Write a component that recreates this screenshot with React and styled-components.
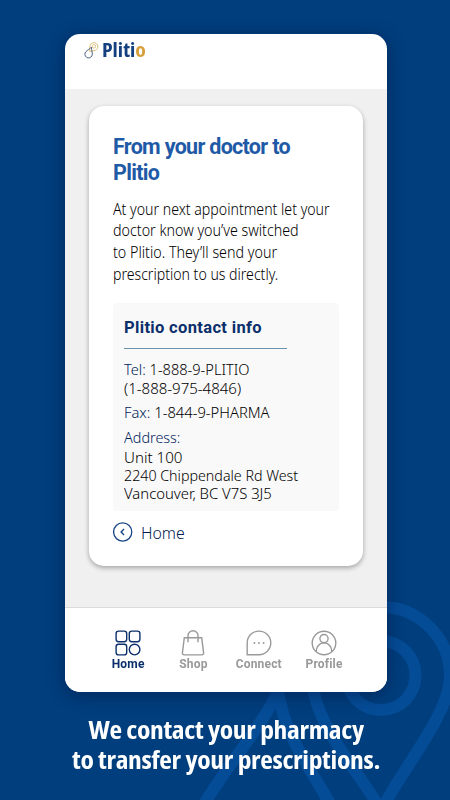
import React from 'react';
import styled, { createGlobalStyle } from 'styled-components';

const GlobalStyle = createGlobalStyle`
  * {
    box-sizing: border-box;
  }
  body {
    margin: 0;
    background: #013e7d;
  }
`;

const Page = styled.main`
  position: relative;
  width: 450px;
  height: 800px;
  overflow: hidden;
  background: #013e7d;
  font-family: 'Noto Sans', 'Open Sans', sans-serif;
`;

// decorative pins behind the phone
const Backdrop = styled.svg`
  position: absolute;
  inset: 0;
`;

const Phone = styled.section`
  position: relative;
  display: flex;
  flex-direction: column;
  width: 322px;
  height: 658px;
  margin: 34px 0 0 64.5px;
  border-radius: 15px;
  overflow: hidden;
  background: #fff;
`;

const PhoneShadow = styled.div`
  display: flow-root;
  filter: drop-shadow(0 3px 9px rgba(0, 10, 50, 0.45));
`;

const Header = styled.header`
  display: flex;
  align-items: flex-start;
  gap: 3px;
  height: 54.5px;
  padding: 5.5px 0 0 19px;
`;

const LogoMark = styled.svg`
  width: 15px;
  height: 18px;
  margin-top: 1px;
`;

const Logo = styled.span`
  font-family: 'Open Sans', sans-serif;
  font-size: 19.5px;
  font-weight: 700;
  font-stretch: 75%;
  line-height: 19px;
  color: #14407f;
  transform: scaleX(1.11);
  transform-origin: left;

  em {
    font-style: normal;
    color: #d8a03c;
  }
`;

const Body = styled.div`
  flex: 1;
  padding: 17.5px 24px 0 24.5px;
  background: #f0f0f0;
`;

const Card = styled.article`
  height: 460px;
  padding: 27.5px 24px 0;
  border-radius: 15px;
  background: #fff;
  box-shadow: 0 2px 5px rgba(0, 0, 0, 0.32);
`;

const Title = styled.h1`
  margin: 0 0 12px;
  font-family: Roboto, sans-serif;
  font-size: 21.5px;
  font-weight: 700;
  line-height: 26px;
  letter-spacing: -0.7px;
  color: #1f5aa6;
`;

const Line = styled.span`
  display: block;
  width: max-content;
  white-space: nowrap;
  transform: scaleX(${props => props.$fit || 1});
  transform-origin: left;
`;

const Intro = styled.p`
  margin: 0 0 18.5px;
  font-size: 16.5px;
  font-weight: 300;
  line-height: 21.7px;
  color: #000;
`;

const Contact = styled.div`
  height: 208px;
  padding: 15.5px 11px 0;
  border-radius: 4px;
  background: #f9f9f9;
`;

const ContactTitle = styled.h2`
  width: 162.5px;
  margin: 0 0 11px;
  padding-bottom: 9.5px;
  border-bottom: 1px solid #6a93ad;
  font-family: Roboto, sans-serif;
  font-size: 16.5px;
  font-weight: 700;
  line-height: 20px;
  letter-spacing: 0.34px;
  color: #0b2f6b;
`;

const Detail = styled.div`
  margin-bottom: ${props => props.$gap || 0}px;
  font-size: ${props => props.$size || 15}px;
  font-weight: 300;
  line-height: ${props => props.$height || 19}px;
  color: #000;
`;

const Label = styled.span`
  color: #00235c;
`;

const BackLink = styled.a`
  display: flex;
  align-items: center;
  gap: 7.5px;
  height: 20px;
  margin-top: 11.5px;
  font-size: 16.5px;
  font-weight: 300;
  color: #00194f;
`;

const Nav = styled.nav`
  display: grid;
  grid-template-columns: repeat(4, 65.3px);
  height: 85px;
  padding: 21px 0 0 31px;
  border-top: 1px solid #dcdcdc;
  background: #fff;
`;

const NavItem = styled.div`
  display: flex;
  flex-direction: column;
  align-items: center;
  font-family: Roboto, sans-serif;
  font-size: 12px;
  font-weight: 700;
  line-height: 15px;
  letter-spacing: 0.18px;
  color: ${props => (props.$active ? '#0b2f6b' : '#999')};

  svg {
    display: block;
    width: 28px;
    height: 28px;
  }
`;

const Caption = styled.p`
  display: flex;
  flex-direction: column;
  align-items: center;
  position: relative;
  margin: 22px 0 0 2px;
  font-family: 'Open Sans', sans-serif;
  font-size: 25px;
  font-weight: 700;
  font-stretch: 75%;
  line-height: 30px;
  letter-spacing: -0.3px;
  color: #fff;

  ${Line} {
    transform-origin: center;
  }
`;

const icons = {
  Home: (
    <>
      <rect x="2.1" y="2.1" width="10.6" height="10.6" rx="2.4" />
      <rect x="15.3" y="2.1" width="10.6" height="10.6" rx="2.4" />
      <rect x="2.1" y="15.3" width="10.6" height="10.6" rx="2.4" />
      <circle cx="20.6" cy="20.6" r="5.3" />
    </>
  ),
  Shop: (
    <>
      <path d="M5.3 8.7h17.4l1.9 15.2a1.8 1.8 0 0 1-1.8 2H5.2a1.8 1.8 0 0 1-1.8-2z" />
      <path d="M9 12.8V6.6a5 4.8 0 0 1 10 0v6.2" />
    </>
  ),
  Connect: (
    <>
      <path d="M2.2 25.7V14A11.8 11.8 0 1 1 14 25.7z" />
      <path d="M9.4 14h.01M14 14h.01M18.6 14h.01" strokeWidth="1.9" />
    </>
  ),
  Profile: (
    <>
      <circle cx="14" cy="14" r="11.8" />
      <circle cx="14" cy="9.6" r="4.1" />
      <path d="M6.3 22.6v-1a7.7 7.7 0 0 1 15.4 0v1" />
    </>
  ),
};

const tabs = ['Home', 'Shop', 'Connect', 'Profile'];

const intro = [
  ['At your next appointment let your', 0.857],
  ['doctor know you’ve switched', 0.866],
  ['to Plitio. They’ll send your', 0.866],
  ['prescription to us directly.', 0.855],
];

const address = [
  ['Unit 100', 1.03],
  ['2240 Chippendale Rd West', 0.97],
  ['Vancouver, BC V7S 3J5', 1.01],
];

const App = () => (
  <Page>
    <GlobalStyle />
    <Backdrop width="450" height="800" fill="none" stroke="#054c96" strokeWidth="12">
      <circle cx="381" cy="675.5" r="34.5" />
      <path d="M381 812C372 786 312 728 312 676a69 69 0 0 1 138 0C450 716 396 776 381 812z" />
      <path d="M203 806C226 766 266 722 278 690C284 738 316 776 331 806" />
    </Backdrop>

    <PhoneShadow>
      <Phone>
        <Header>
          <LogoMark viewBox="0 0 15 18" fill="none">
            <path d="M5.6 10.4C6.3 8 5.4 6.3 6.2 4.1a4 4 0 1 1 6 4.8C10.3 10.3 8 9.4 5.6 10.4z" stroke="#d9b56a" strokeWidth="0.9" />
            <circle cx="9.9" cy="5.4" r="1.7" stroke="#d9b56a" strokeWidth="0.8" />
            <path d="M7.4 6.1C5.6 8.4 3.5 8.8 1.9 10.7a3.7 3.7 0 1 0 6 4.2C9.1 12.7 7.3 9.5 7.4 6.1z" stroke="#3c5077" strokeWidth="0.9" />
          </LogoMark>
          <Logo>Pliti<em>o</em></Logo>
        </Header>

        <Body>
          <Card>
            <Title>From your doctor to<br />Plitio</Title>
            <Intro>
              {intro.map(([text, fit]) => (
                <Line key={text} $fit={fit}>{text}</Line>
              ))}
            </Intro>

            <Contact>
              <ContactTitle>Plitio contact info</ContactTitle>
              <Detail $gap={5.5}>
                <Line $fit={0.973}><Label>Tel:</Label> 1-888-9-PLITIO</Line>
                <Line>(1-888-975-4846)</Line>
              </Detail>
              <Detail $gap={6}>
                <Line $fit={0.983}><Label>Fax:</Label> 1-844-9-PHARMA</Line>
              </Detail>
              <Detail $gap={0.4}>
                <Line $fit={0.96}><Label>Address:</Label></Line>
              </Detail>
              <Detail $height={18} $size={14.7}>
                {address.map(([text, fit]) => (
                  <Line key={text} $fit={fit}>{text}</Line>
                ))}
              </Detail>
            </Contact>

            <BackLink>
              <svg width="20" height="20" fill="none" stroke="#184587" strokeWidth="1.3">
                <circle cx="9.7" cy="10" r="9.1" />
                <path d="M11 7L8.1 10l2.9 3" strokeWidth="1.4" />
              </svg>
              <Line $fit={0.96}>Home</Line>
            </BackLink>
          </Card>
        </Body>

        <Nav>
          {tabs.map(tab => (
            <NavItem key={tab} $active={tab === 'Home'}>
              <svg
                viewBox="0 0 28 28"
                fill="none"
                stroke="currentColor"
                strokeWidth="1.4"
                strokeLinecap="round"
              >
                {icons[tab]}
              </svg>
              {tab}
            </NavItem>
          ))}
        </Nav>
      </Phone>
    </PhoneShadow>

    <Caption>
      <Line $fit={1.1}>We contact your pharmacy</Line>
      <Line $fit={1.1}>to transfer your prescriptions.</Line>
    </Caption>
  </Page>
);

export default App;
